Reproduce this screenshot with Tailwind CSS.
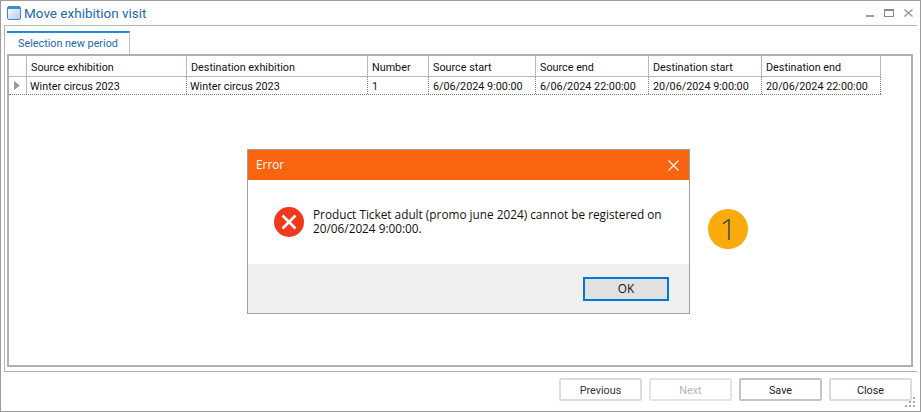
<!doctype html>
<html>
  <head>
    <meta charset="UTF-8" />
    <title>Move exhibition visit</title>
    <script src="https://cdn.jsdelivr.net/npm/@tailwindcss/browser@4"></script>
  </head>
  <body class="bg-white">
    <div class="relative w-[921px] h-[412px] overflow-hidden bg-white font-['Roboto',sans-serif] text-[10.8px] text-[#111]">
      <!-- window -->
      <div class="flex flex-col h-full border border-[#9c9c9c]">
        <div class="flex items-center h-[24px] pl-[6px] shrink-0">
          <svg width="14" height="14" viewBox="0 0 14 14" class="shrink-0">
            <defs>
              <linearGradient id="win" x1="0" y1="0" x2="1" y2="1">
                <stop offset="0" stop-color="#ffffff" />
                <stop offset="1" stop-color="#b9c6ee" />
              </linearGradient>
            </defs>
            <rect x="0.5" y="0.5" width="13" height="13" rx="1.5" fill="url(#win)" stroke="#3b8fd0" />
            <rect x="1" y="1" width="12" height="2" fill="#3b8fd0" />
          </svg>
          <span class="ml-[3px] pt-[1px] text-[13.5px] text-[#2268ae] leading-none">Move exhibition visit</span>
          <div class="ml-auto flex items-center gap-[10px] pr-[7px]">
            <svg width="8" height="8" viewBox="0 0 8 8"><rect x="0" y="6" width="8" height="2" fill="#a0a0a0" /></svg>
            <svg width="10" height="8" viewBox="0 0 10 8"><rect x="0.5" y="0.5" width="9" height="7" fill="none" stroke="#8a8a8a" /><rect x="0" y="0" width="10" height="2" fill="#8a8a8a" /></svg>
            <svg width="9" height="8" viewBox="0 0 9 8"><path d="M0.5 0.5 L8.5 7.5 M8.5 0.5 L0.5 7.5" stroke="#9a9a9a" stroke-width="1.4" fill="none" /></svg>
          </div>
        </div>
        <!-- panel -->
        <div class="ml-[3px] mr-[3px] h-[347px] border-t border-b border-l border-[#b4b4b4] shrink-0 pl-[2px] pr-[4px] pt-[5px] pb-[4px] flex flex-col">
          <div class="w-[123px] h-[23px] border-t-2 border-t-[#1a8fe0] border-r border-[#c4c4c4] flex items-center pl-[11px] pt-[1px] text-[10.8px] text-[#2268ae] leading-none whitespace-nowrap bg-white shrink-0">Selection new period</div>
          <div class="flex-1 border-2 border-[#b0b0b0]">
            <div class="w-[872px] border-b border-dotted border-[#808080]">
              <div class="flex h-[21px] pt-0 border-b border-[#b8b8b8] border-r">
                <div class="w-[18px] border-r border-[#b8b8b8]"></div>
                <div class="w-[160px] border-r border-[#b8b8b8] pl-[4px] pt-[4px] flex items-center">Source exhibition</div>
                <div class="w-[181px] border-r border-[#b8b8b8] pl-[4px] pt-[4px] flex items-center">Destination exhibition</div>
                <div class="w-[61px] border-r border-[#b8b8b8] pl-[4px] pt-[4px] flex items-center">Number</div>
                <div class="w-[107px] border-r border-[#b8b8b8] pl-[4px] pt-[4px] flex items-center">Source start</div>
                <div class="w-[113px] border-r border-[#b8b8b8] pl-[4px] pt-[4px] flex items-center">Source end</div>
                <div class="w-[113px] border-r border-[#b8b8b8] pl-[4px] pt-[4px] flex items-center">Destination start</div>
                <div class="flex-1 pl-[4px] pt-[4px] flex items-center">Destination end</div>
              </div>
              <div class="flex h-[17px] border-r border-dotted border-[#808080]">
                <div class="w-[18px] border-r border-[#b8b8b8] flex items-center pl-[5px]">
                  <svg width="6" height="9" viewBox="0 0 6 9"><path d="M0 0 L6 4.5 L0 9 Z" fill="#9a9a9a" /></svg>
                </div>
                <div class="w-[160px] border-r border-dotted border-[#808080] pl-[3px] pt-[3px] flex items-center">Winter circus 2023</div>
                <div class="w-[181px] border-r border-dotted border-[#808080] pl-[3px] pt-[3px] flex items-center">Winter circus 2023</div>
                <div class="w-[61px] border-r border-dotted border-[#808080] pl-[4px] pt-[3px] flex items-center">1</div>
                <div class="w-[107px] border-r border-dotted border-[#808080] pl-[4px] pt-[3px] flex items-center">6/06/2024 9:00:00</div>
                <div class="w-[113px] border-r border-dotted border-[#808080] pl-[4px] pt-[3px] flex items-center">6/06/2024 22:00:00</div>
                <div class="w-[113px] border-r border-dotted border-[#808080] pl-[4px] pt-[3px] flex items-center">20/06/2024 9:00:00</div>
                <div class="flex-1 pl-[4px] pt-[3px] flex items-center">20/06/2024 22:00:00</div>
              </div>
            </div>
          </div>
        </div>
        <!-- footer -->
        <div class="flex justify-end gap-[7px] pt-[6px] pr-[8px]">
          <button class="w-[83px] h-[23px] pt-[3px] border-2 border-[#dcdcdc] rounded-[2px] bg-white text-[#333]">Previous</button>
          <button class="w-[83px] h-[23px] pt-[3px] border-2 border-[#e4e4e4] rounded-[2px] bg-white text-[#b5b5b5]">Next</button>
          <button class="w-[83px] h-[23px] pt-[3px] border-2 border-[#c4c4c4] rounded-[2px] bg-white text-[#222]">Save</button>
          <button class="w-[83px] h-[23px] pt-[3px] border-2 border-[#dcdcdc] rounded-[2px] bg-white text-[#222]">Close</button>
        </div>
      </div>

      <!-- resize grip -->
      <svg class="absolute left-[905px] top-[396px]" width="13" height="13" viewBox="0 0 13 13">
        <path d="M8 1h2v2h-2z M8 5h2v2h-2z M4 5h2v2h-2z M0 9h2v2h-2z M4 9h2v2h-2z M8 9h2v2h-2z" fill="#a8a8a8" />
      </svg>

      <!-- error dialog -->
      <div class="absolute left-[247px] top-[149px] w-[443px] h-[165px] border border-[#a0a0a0] bg-white flex flex-col font-['Open_Sans',sans-serif] text-[11.8px] text-[#111]">
        <div class="h-[30px] bg-[#f96410] flex items-center justify-between pl-[8px] pr-[10px] text-white shrink-0">
          <span>Error</span>
          <svg width="11" height="11" viewBox="0 0 11 11"><path d="M0.5 0.5 L10.5 10.5 M10.5 0.5 L0.5 10.5" stroke="white" stroke-width="1.1" fill="none" /></svg>
        </div>
        <div class="h-[84px] flex items-start pl-[26px] pt-[27px] shrink-0">
          <svg width="30" height="30" viewBox="0 0 30 30" class="shrink-0">
            <circle cx="15" cy="15" r="15" fill="#f0391c" />
            <path d="M8.5 8.5 L21.5 21.5 M21.5 8.5 L8.5 21.5" stroke="white" stroke-width="2.6" fill="none" />
          </svg>
          <p class="ml-[9px] -mt-[1px] w-[380px] leading-[14px] pt-[1px]">Product Ticket adult (promo june 2024) cannot be registered on 20/06/2024 9:00:00.</p>
        </div>
        <div class="flex-1 bg-[#efefef] flex justify-end items-start pt-[13px] pr-[20px]">
          <button class="w-[86px] h-[24px] border-2 border-[#0078d7] bg-[#e1e1e1] text-[11.8px] text-[#111]">OK</button>
        </div>
      </div>

      <!-- callout badge -->
      <div class="absolute left-[708px] top-[209px] w-[40px] h-[40px] rounded-full bg-[#f9ab0b] flex items-center justify-center font-['Open_Sans',sans-serif] font-light text-[30px] leading-none text-[#444]">1</div>
    </div>
  </body>
</html>
